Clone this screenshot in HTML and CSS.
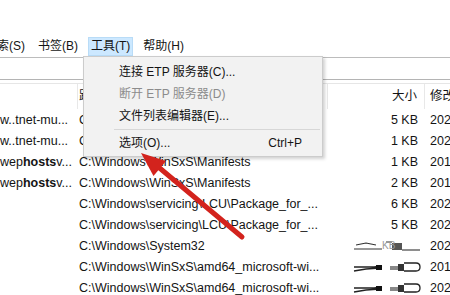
FILE: index.html
```html
<!DOCTYPE html>
<html lang="zh-CN">
<head>
<meta charset="utf-8">
<title>Everything</title>
<link rel="stylesheet" href="styles.css">
</head>
<body>
<div class="window">
  <div class="titlespace"></div>
  <nav class="menubar">
    <span class="mitem first">搜索(S)</span>
    <span class="mitem">书签(B)</span>
    <span class="mitem active">工具(T)</span>
    <span class="mitem">帮助(H)</span>
  </nav>
  <div class="searchrow"><div class="field"></div></div>
  <div class="list">
    <div class="row header">
      <div class="c name"></div>
      <div class="c path">路径</div>
      <div class="c size">大小</div>
      <div class="c date">修改</div>
    </div>
    <div class="row"><div class="c name">w..tnet-mu...</div><div class="c path">C:\Windows\WinSxS\x86_netfx</div><div class="c size">5 KB</div><div class="c date">2021/3/12</div></div>
    <div class="row"><div class="c name">w..tnet-mu...</div><div class="c path">C:\Windows\WinSxS\x86_netfx</div><div class="c size">1 KB</div><div class="c date">2021/3/12</div></div>
    <div class="row"><div class="c name">wep<b>hosts</b>v...</div><div class="c path">C:\Windows\WinSxS\Manifests</div><div class="c size">1 KB</div><div class="c date">2019/12/7</div></div>
    <div class="row"><div class="c name">wep<b>hosts</b>v...</div><div class="c path">C:\Windows\WinSxS\Manifests</div><div class="c size">2 KB</div><div class="c date">2019/12/7</div></div>
    <div class="row"><div class="c name"></div><div class="c path">C:\Windows\servicing\LCU\Package_for_...</div><div class="c size">6 KB</div><div class="c date">2021/3/12</div></div>
    <div class="row"><div class="c name"></div><div class="c path">C:\Windows\servicing\LCU\Package_for_...</div><div class="c size">5 KB</div><div class="c date">2021/3/12</div></div>
    <div class="row"><div class="c name"></div><div class="c path">C:\Windows\System32</div><div class="c size scrib">
      <svg width="70" height="14" viewBox="0 0 70 14"><path d="M2 10 H30 M4 6 L14 4 L24 6 M34 3 H40" stroke="#333" stroke-width="1.2" fill="none"/><rect x="40" y="4" width="10" height="7" fill="#555"/><path d="M50 11 H68" stroke="#444" stroke-width="1.2"/><text x="30" y="10" font-size="10" fill="#999" font-family="Liberation Sans, sans-serif">KB</text></svg>
    </div><div class="c date">2021/3/12</div></div>
    <div class="row"><div class="c name"></div><div class="c path">C:\Windows\WinSxS\amd64_microsoft-wi...</div><div class="c size scrib">
      <svg width="70" height="14" viewBox="0 0 70 14"><path d="M2 11 L14 9 L28 8 M2 7 H22 L30 6" stroke="#222" stroke-width="1.3" fill="none"/><rect x="24" y="5" width="6" height="5" fill="#111"/><rect x="38" y="6" width="8" height="4" fill="#888"/><rect x="46" y="4" width="6" height="7" fill="#333"/><path d="M52 3 H64 Q68 3 68 7 Q68 11 64 11 H52" stroke="#222" stroke-width="1.3" fill="none"/></svg>
    </div><div class="c date">2019/12/7</div></div>
    <div class="row"><div class="c name"></div><div class="c path">C:\Windows\WinSxS\amd64_microsoft-wi...</div><div class="c size scrib">
      <svg width="70" height="14" viewBox="0 0 70 14"><path d="M2 11 L14 9 L28 8 M2 7 H22 L30 6" stroke="#222" stroke-width="1.3" fill="none"/><rect x="24" y="5" width="6" height="5" fill="#111"/><rect x="38" y="6" width="8" height="4" fill="#888"/><rect x="46" y="4" width="6" height="7" fill="#333"/><path d="M52 3 H64 Q68 3 68 7 Q68 11 64 11 H52" stroke="#222" stroke-width="1.3" fill="none"/></svg>
    </div><div class="c date">2021/3/12</div></div>
  </div>

  <div class="popup">
    <div class="pitem">连接 ETP 服务器(C)...</div>
    <div class="pitem disabled">断开 ETP 服务器(D)</div>
    <div class="pitem">文件列表编辑器(E)...</div>
    <div class="psep"></div>
    <div class="pitem"><span>选项(O)...</span><span class="key">Ctrl+P</span></div>
  </div>

  <svg class="arrow" width="450" height="295" viewBox="0 0 450 295">
    <line x1="156" y1="165" x2="242" y2="237" stroke="#d3231d" stroke-width="5" stroke-linecap="round"/>
    <polygon points="141,153 153.5,176 166,161" fill="#d3231d"/>
  </svg>
</div>
</body>
</html>
```
FILE: styles.css
```css
* { box-sizing: border-box; }
html, body { margin: 0; padding: 0; background: #fff; }
body {
  font-family: "Liberation Sans", "Noto Sans CJK SC", sans-serif;
  font-size: 12.5px;
  color: #141414;
}
.window {
  position: relative;
  width: 450px;
  height: 295px;
  overflow: hidden;
  background: #fff;
}
.titlespace { height: 37px; }
.menubar {
  display: flex;
  gap: 7px;
  height: 19px;
  align-items: center;
  margin-left: -18px;
  white-space: nowrap;
  font-size: 12px;
}
.mitem {
  padding: 0 3px;
  height: 19px;
  line-height: 19px;
}
.mitem.active {
  background: #cce8ff;
  box-shadow: inset 0 0 0 1px #b9dcf7;
}
.searchrow {
  padding-top: 1px;
  height: 27px;
}
.field {
  height: 23px;
  border-top: 1px solid #bcbcbc;
  border-bottom: 1px solid #b4b4b4;
}
.list {
  border-top: 1px solid #e6e6e6;
}
.row {
  display: grid;
  grid-template-columns: 78px 250px 97px 25px;
  height: 21px;
  align-items: center;
  white-space: nowrap;
}
.row.header { height: 25px; }
.header .c { height: 25px; line-height: 25px; border-right: 1px solid #e8e8e8; }
.header .c.date { border-right: none; }
.c { overflow: hidden; }
.c.name { padding-left: 0; }
.c.name b { font-weight: bold; }
.c.path { padding-left: 1px; }
.c.size { text-align: right; padding-right: 7px; }
.c.date { padding-left: 5px; overflow: hidden; }
.c.scrib { display: flex; justify-content: flex-end; padding-right: 3px; }
.c.scrib svg { display: block; }

.popup {
  position: absolute;
  left: 83px;
  top: 56px;
  width: 240px;
  padding: 4px 2px 2px 2px;
  background: #f2f2f2;
  border: 1px solid #cccccc;
  box-shadow: 2px 2px 3px rgba(0,0,0,0.18);
  font-size: 12px;
  color: #141414;
}
.pitem {
  display: flex;
  justify-content: space-between;
  height: 22px;
  line-height: 22px;
  padding-left: 33px;
  padding-right: 18px;
  white-space: nowrap;
}
.pitem.disabled { color: #8c8c8c; }
.psep {
  height: 1px;
  background: #d7d7d7;
  margin: 2px 0 2px 28px;
}
.key { color: #141414; }
.arrow {
  position: absolute;
  left: 0;
  top: 0;
  pointer-events: none;
}
```
